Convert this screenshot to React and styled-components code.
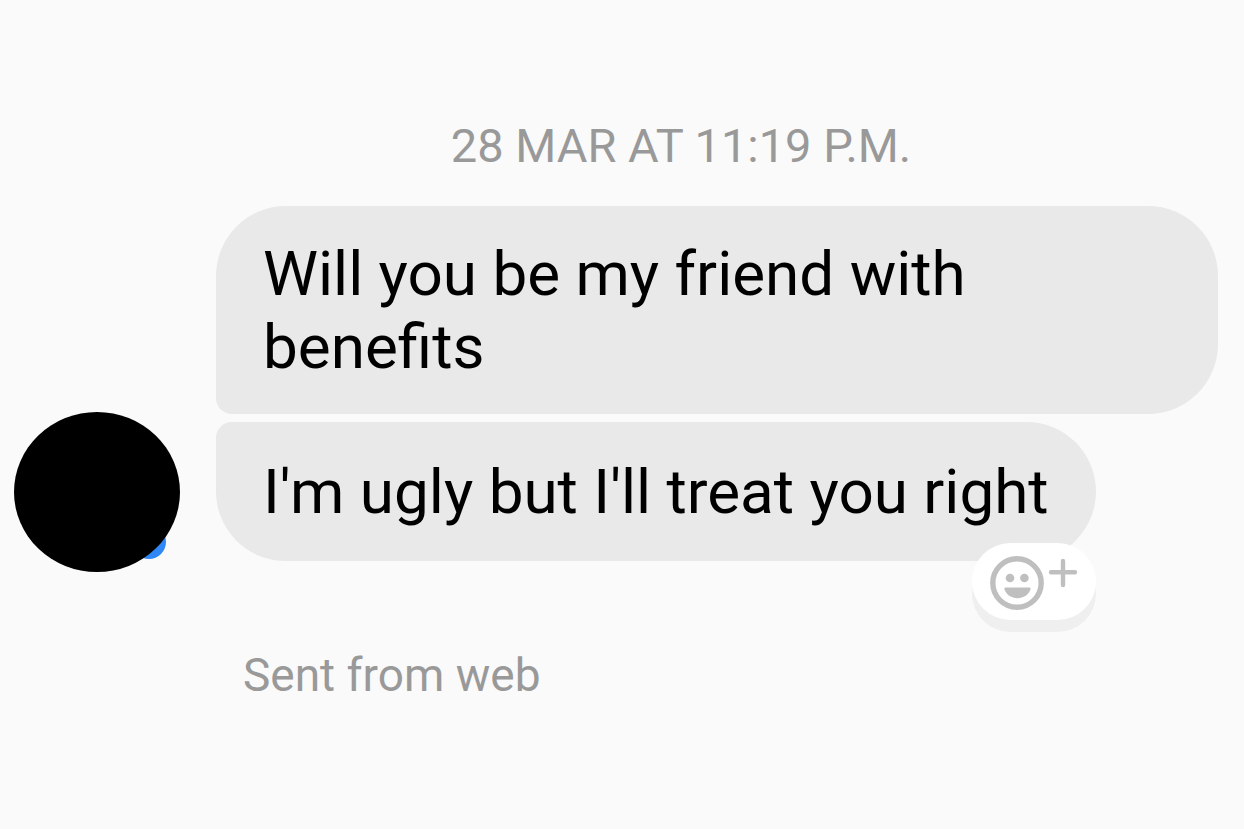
import React from "react";
import styled, { createGlobalStyle } from "styled-components";

const GlobalStyle = createGlobalStyle`
  * {
    box-sizing: border-box;
  }
  body {
    margin: 0;
    background-color: #fafafa;
    font-family: Roboto, "Liberation Sans", sans-serif;
  }
`;

const StyledThread = styled.main`
  min-height: 100vh;
  padding: 120px 26px 40px 14px;
`;

const StyledTimestamp = styled.time`
  display: block;
  margin: 0 0 34px 130px;
  color: #999999;
  font-size: 47px;
  line-height: 52px;
  text-align: center;
  text-transform: uppercase;
`;

const StyledGroup = styled.section`
  display: grid;
  grid-template-columns: 166px 1fr;
  grid-column-gap: 36px;
`;

const StyledAvatar = styled.div`
  position: relative;
  align-self: end;
  height: 160px;
  margin-bottom: -11px;
  &:before {
    content: "";
    position: absolute;
    right: 14px;
    bottom: 13px;
    width: 34px;
    height: 34px;
    border-radius: 50%;
    background-color: #2f88f5;
  }
  &:after {
    content: "";
    position: absolute;
    inset: 0;
    border-radius: 50%;
    background-color: #000000;
  }
`;

const StyledMessages = styled.ul`
  display: flex;
  flex-direction: column;
  align-items: flex-start;
  gap: 8px;
  margin: 0;
  padding: 0;
  list-style: none;
`;

const StyledBubble = styled.li`
  position: relative;
  padding: ${({ $last }) => ($last ? "33px 47px" : "31px 47px")};
  border-radius: ${({ $last }) =>
    $last ? "16px 70px 70px 70px" : "70px 70px 70px 16px"};
  background-color: #e9e9e9;
  color: #000000;
  font-size: 62px;
  line-height: 73px;
  p {
    margin: 0;
  }
`;

const StyledReact = styled.button`
  position: absolute;
  right: 0;
  bottom: -59px;
  width: 124px;
  height: 77px;
  padding: 0;
  border: 0;
  border-radius: 39px;
  background-color: #ffffff;
  box-shadow: 0 12px 0 #efefef;
  cursor: pointer;
  svg {
    display: block;
  }
`;

const StyledStatus = styled.p`
  margin: 87px 0 0 229px;
  color: #999999;
  font-size: 46px;
  line-height: 54px;
`;

const AddReactionIcon = () => (
  <svg
    width="124"
    height="77"
    viewBox="0 0 124 77"
    fill="none"
    stroke="#bfbfbf"
    aria-hidden="true"
  >
    <circle cx="45" cy="40" r="24.2" strokeWidth="5.4" />
    <g fill="#bfbfbf" stroke="none">
      <circle cx="38" cy="35" r="4.3" />
      <circle cx="52.4" cy="35" r="4.3" />
      <path d="M34 44.6h23c1.4 0 1.9 1 1.4 2.2C56.400 52 51.500 55.200 45.500 55.200S34.600 52 32.600 46.800c-.5-1.200 0-2.200 1.400-2.200z" />
    </g>
    <path d="M91 18v24M79 29.200h24" strokeWidth="4.400" strokeLinecap="round" />
  </svg>
);

const messages = [
  "Will you be my friend with benefits",
  "I'm ugly but I'll treat you right",
];

const App = () => (
  <>
    <GlobalStyle />
    <StyledThread>
      <StyledTimestamp>28 Mar at 11:19 p.m.</StyledTimestamp>

      <StyledGroup>
        <StyledAvatar role="img" aria-label="Sender" />
        <StyledMessages>
          {messages.map((message, i) => {
            const last = i === messages.length - 1;
            return (
              <StyledBubble key={i} $last={last}>
                <p>{message}</p>
                {last && (
                  <StyledReact type="button" aria-label="Add reaction">
                    <AddReactionIcon />
                  </StyledReact>
                )}
              </StyledBubble>
            );
          })}
        </StyledMessages>
      </StyledGroup>

      <StyledStatus>Sent from web</StyledStatus>
    </StyledThread>
  </>
);

export default App;
